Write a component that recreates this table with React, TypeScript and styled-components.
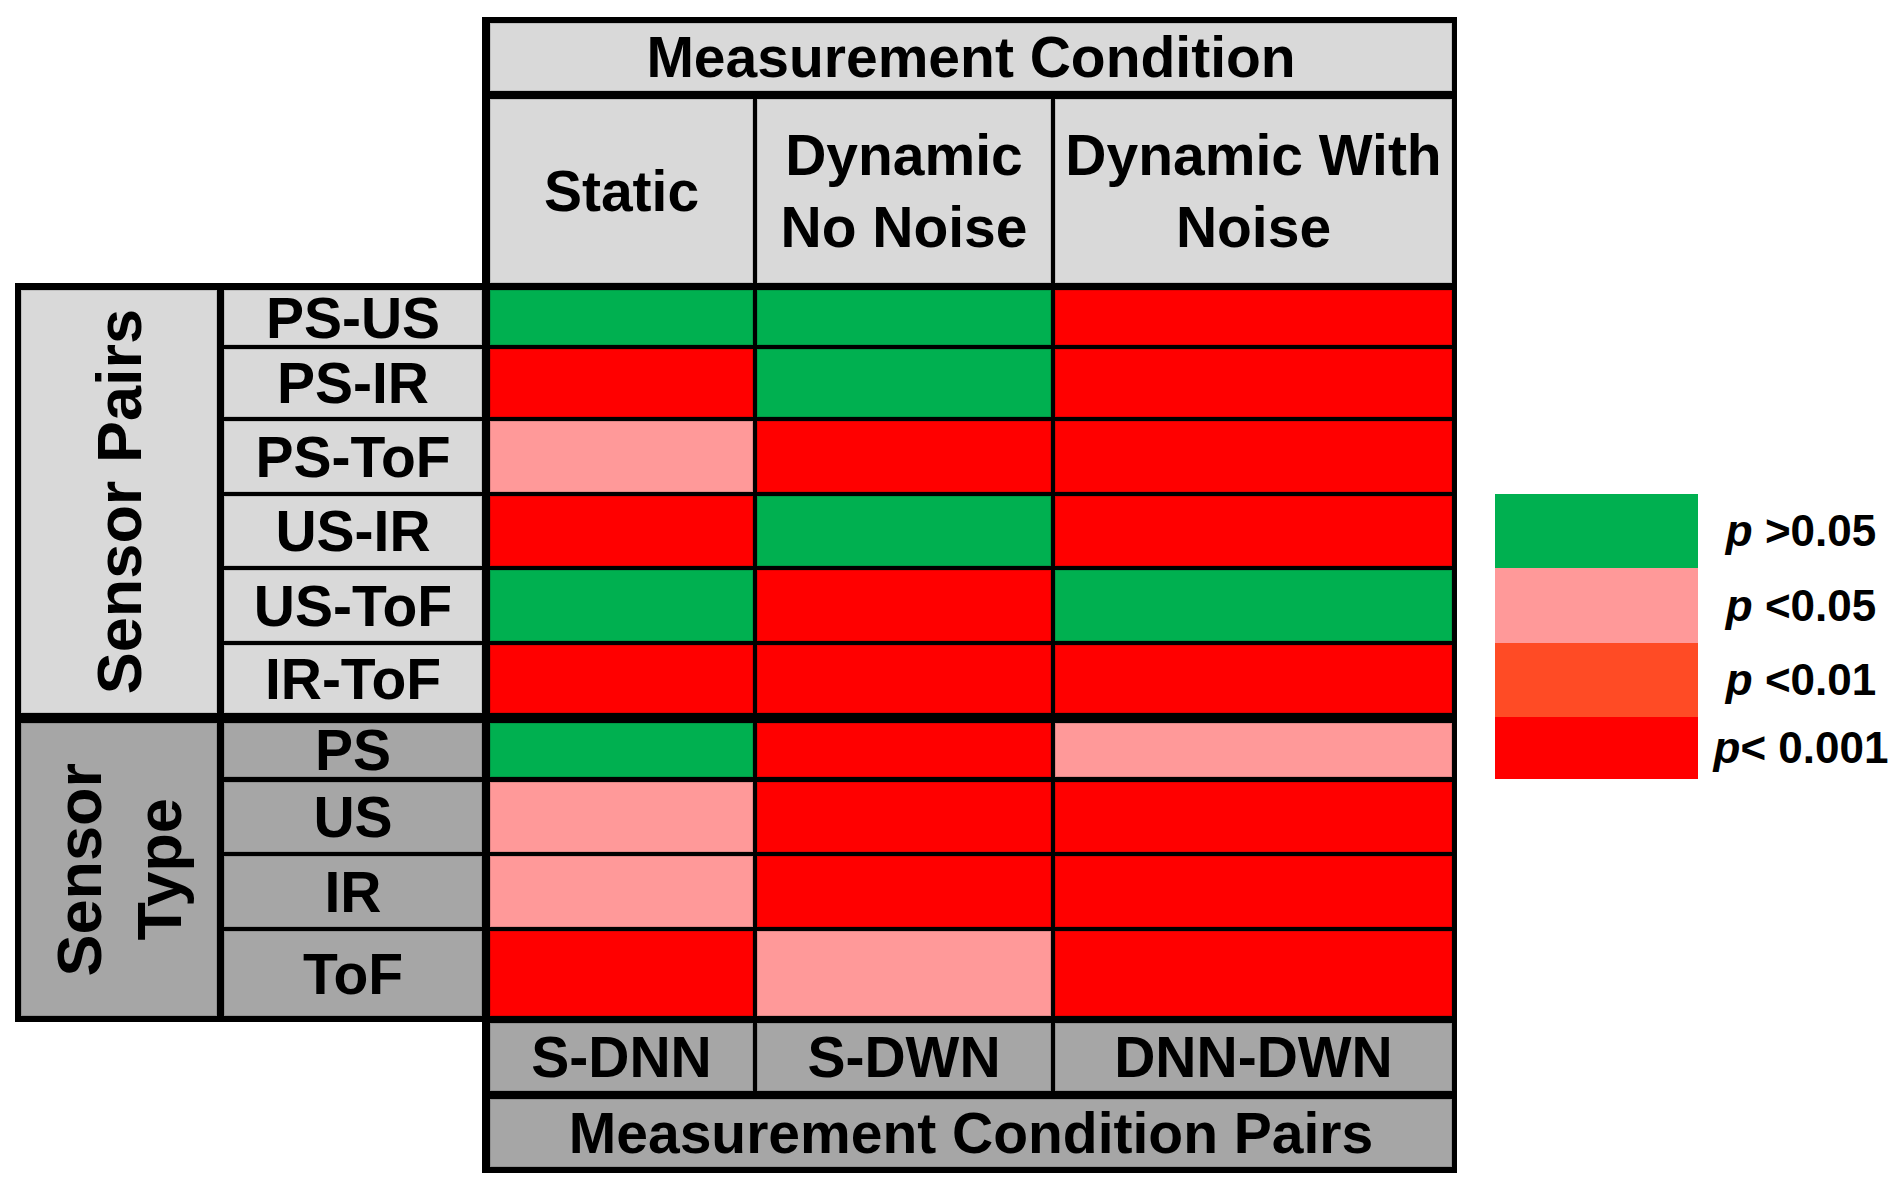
import { Fragment } from "react";
import styled, { createGlobalStyle } from "styled-components";

const GlobalStyle = createGlobalStyle`
  html, body {
    margin: 0;
    background: #ffffff;
    overflow: hidden;
  }
  body {
    font-family: "Liberation Sans", Arial, sans-serif;
    color: #000000;
  }
`;

const lightGrey = "#d9d9d9";
const darkGrey = "#a6a6a6";
const green = "#00b050";
const pink = "#ff9999";
const orange = "#ff4b25";
const red = "#ff0000";

// thickness of the black rule above each row / left of each column
const rowLines = [6, 8, 7, 4, 4, 4, 4, 4, 10, 5, 4, 4, 7, 8];
const colLines = [6, 7, 8, 4, 4];
const lastRow = rowLines.length;
const lastCol = colLines.length;

const Figure = styled.div`
  display: flex;
  align-items: flex-start;
  padding: 17px 0 0 15px;
`;

const Table = styled.div`
  display: grid;
  grid-template-columns: 202px 265px 271px 298px 406px;
  grid-template-rows: 74px 192px 62px 72px 75px 74px 75px 72px 64px 75px 75px 89px 75px 82px;
  background: #000000;
`;

type Place = { $row: number; $col: number; $rows?: number; $cols?: number };

const Cell = styled.div<Place & { $bg: string }>`
  grid-row: ${({ $row, $rows = 1 }) => `${$row + 1} / span ${$rows}`};
  grid-column: ${({ $col, $cols = 1 }) => `${$col + 1} / span ${$cols}`};
  margin-top: ${({ $row }) => rowLines[$row]}px;
  margin-left: ${({ $col }) => colLines[$col]}px;
  margin-right: ${({ $col, $cols = 1 }) => ($col + $cols === lastCol ? 5 : 0)}px;
  margin-bottom: ${({ $row, $rows = 1 }) => ($row + $rows === lastRow ? 6 : 0)}px;
  background: ${({ $bg }) => $bg};
  box-shadow: inset 0 0 0 1px rgba(0, 0, 0, 0.12);
  display: flex;
  align-items: center;
  justify-content: center;
  text-align: center;
  font-size: 57px;
  font-weight: bold;
  line-height: 72px;
  white-space: nowrap;
`;

const Blank = styled.div<Place & { $gapTop?: number }>`
  grid-row: ${({ $row, $rows = 1 }) => `${$row + 1} / span ${$rows}`};
  grid-column: ${({ $col, $cols = 1 }) => `${$col + 1} / span ${$cols}`};
  margin-top: ${({ $gapTop = 0 }) => $gapTop}px;
  background: #ffffff;
`;

const SideTitle = styled.span`
  writing-mode: vertical-rl;
  transform: rotate(180deg);
  font-size: 63px;
  line-height: 80px;
  text-align: center;
`;

const Legend = styled.div`
  display: grid;
  grid-template-columns: 203px 180px;
  grid-template-rows: 74px 75px 74px 62px;
  column-gap: 13px;
  margin: 477px 0 0 38px;
`;

const Swatch = styled.div<{ $bg: string }>`
  grid-column: 1;
  background: ${({ $bg }) => $bg};
`;

const LegendLabel = styled.div`
  grid-column: 2;
  display: flex;
  align-items: center;
  justify-content: center;
  font-size: 44px;
  font-weight: bold;
  white-space: pre;
`;

const conditions = [
  { label: "Static" },
  { label: "Dynamic", second: "No Noise" },
  { label: "Dynamic With", second: "Noise" },
];

const G = green;
const P = pink;
const R = red;

const pairRows = [
  { label: "PS-US", cells: [G, G, R] },
  { label: "PS-IR", cells: [R, G, R] },
  { label: "PS-ToF", cells: [P, R, R] },
  { label: "US-IR", cells: [R, G, R] },
  { label: "US-ToF", cells: [G, R, G] },
  { label: "IR-ToF", cells: [R, R, R] },
];

const typeRows = [
  { label: "PS", cells: [G, R, P] },
  { label: "US", cells: [P, R, R] },
  { label: "IR", cells: [P, R, R] },
  { label: "ToF", cells: [R, P, R] },
];

const conditionPairs = ["S-DNN", "S-DWN", "DNN-DWN"];

const legendItems = [
  { color: green, sign: " >0.05" },
  { color: pink, sign: " <0.05" },
  { color: orange, sign: " <0.01" },
  { color: red, sign: "< 0.001" },
];

const App = () => {
  const pairStart = 2;
  const typeStart = pairStart + pairRows.length;

  return (
    <>
      <GlobalStyle />
      <Figure>
        <Table>
          <Blank $row={0} $col={0} $rows={2} $cols={2} />
          <Cell $row={0} $col={2} $cols={3} $bg={lightGrey}>
            Measurement Condition
          </Cell>
          {conditions.map((c, i) => (
            <Cell key={c.label} $row={1} $col={2 + i} $bg={lightGrey}>
              <span>
                {c.label}
                {c.second && (
                  <>
                    <br />
                    {c.second}
                  </>
                )}
              </span>
            </Cell>
          ))}

          <Cell $row={pairStart} $col={0} $rows={pairRows.length} $bg={lightGrey}>
            <SideTitle>Sensor Pairs</SideTitle>
          </Cell>
          {pairRows.map((r, i) => (
            <Fragment key={r.label}>
              <Cell $row={pairStart + i} $col={1} $bg={lightGrey}>
                {r.label}
              </Cell>
              {r.cells.map((bg, j) => (
                <Cell key={j} $row={pairStart + i} $col={2 + j} $bg={bg} />
              ))}
            </Fragment>
          ))}

          <Cell $row={typeStart} $col={0} $rows={typeRows.length} $bg={darkGrey}>
            <SideTitle>
              Sensor
              <br />
              Type
            </SideTitle>
          </Cell>
          {typeRows.map((r, i) => (
            <Fragment key={r.label}>
              <Cell $row={typeStart + i} $col={1} $bg={darkGrey}>
                {r.label}
              </Cell>
              {r.cells.map((bg, j) => (
                <Cell key={j} $row={typeStart + i} $col={2 + j} $bg={bg} />
              ))}
            </Fragment>
          ))}

          <Blank $row={12} $col={0} $rows={2} $cols={2} $gapTop={6} />
          {conditionPairs.map((label, i) => (
            <Cell key={label} $row={12} $col={2 + i} $bg={darkGrey}>
              {label}
            </Cell>
          ))}
          <Cell $row={13} $col={2} $cols={3} $bg={darkGrey}>
            Measurement Condition Pairs
          </Cell>
        </Table>

        <Legend>
          {legendItems.map((item) => (
            <Fragment key={item.color}>
              <Swatch $bg={item.color} />
              <LegendLabel>
                <span>
                  <i>p</i>
                  {item.sign}
                </span>
              </LegendLabel>
            </Fragment>
          ))}
        </Legend>
      </Figure>
    </>
  );
};

export default App;
